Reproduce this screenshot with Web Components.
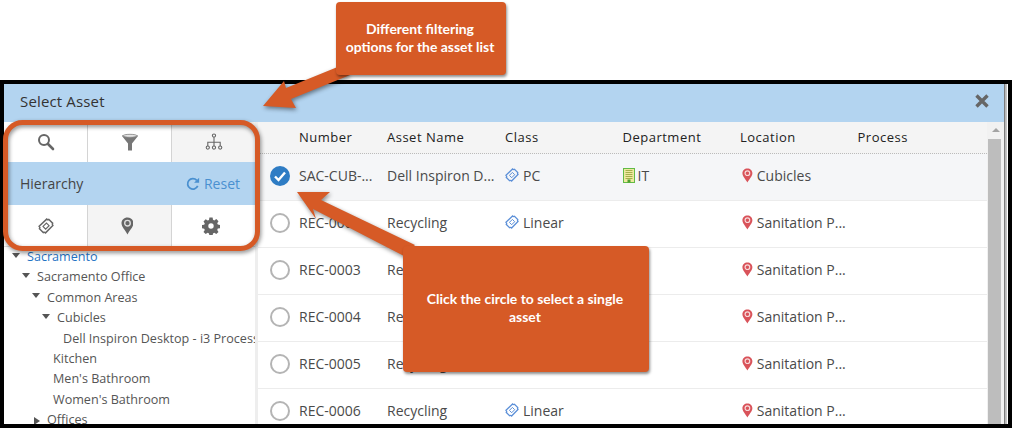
<!DOCTYPE html>
<html>
<head>
<meta charset="utf-8">
<style>
  html, body { margin: 0; padding: 0; background: #fff; }
  body { font-family: "Open Sans", "Liberation Sans", sans-serif; overflow: hidden; }
</style>
</head>
<body>
<screen-shot>
  <asset-dialog heading="Select Asset">
    <filter-panel slot="side"></filter-panel>
    <asset-tree slot="side"></asset-tree>
    <asset-table slot="main">
      <asset-row number="SAC-CUB-..." name="Dell Inspiron D..." cls="PC" dept="IT" loc="Cubicles" checked></asset-row>
      <asset-row number="REC-0002" name="Recycling" cls="Linear" loc="Sanitation P..."></asset-row>
      <asset-row number="REC-0003" name="Recycling" loc="Sanitation P..."></asset-row>
      <asset-row number="REC-0004" name="Recycling" loc="Sanitation P..."></asset-row>
      <asset-row number="REC-0005" name="Recycling" loc="Sanitation P..."></asset-row>
      <asset-row number="REC-0006" name="Recycling" cls="Linear" loc="Sanitation P..."></asset-row>
    </asset-table>
  </asset-dialog>
  <annotation-layer></annotation-layer>
  <call-out style="left:336px;top:2px;width:170px;height:73px">Different filtering<br>options for the asset list</call-out>
  <call-out style="left:403px;top:246px;width:246px;height:126px">Click the circle to select a single<br>asset</call-out>
</screen-shot>

<script>
const icons = {
  search: (c) => `<svg width="18" height="18" viewBox="0 0 18 18"><circle cx="7" cy="7" r="5" fill="none" stroke="${c}" stroke-width="2"/><path d="M11 11l5 5" stroke="${c}" stroke-width="2.6" stroke-linecap="round"/></svg>`,
  funnel: (c) => `<svg width="18" height="18" viewBox="0 0 18 18"><path d="M1 3C1 1 17 1 17 3L11 10.500V17.500H7V10.500Z" fill="${c}"/><ellipse cx="9" cy="2.800" rx="7" ry="1.500" fill="#e4e4e4" stroke="#8a8a8a" stroke-width=".8"/></svg>`,
  tree: (c) => `<svg width="18" height="18" viewBox="0 0 18 18" fill="none" stroke="${c}" stroke-width="1.100"><circle cx="9" cy="2.600" r="1.600"/><path d="M9 4.200V13M2.800 13V9.200H15.200V13"/><circle cx="2.800" cy="14.600" r="1.600"/><circle cx="9" cy="14.600" r="1.600"/><circle cx="15.200" cy="14.600" r="1.600"/></svg>`,
  ticket: (c, s = 14) => `<svg width="${s}" height="${s}" viewBox="0 0 14 14" fill="none"><path d="M1 7.200L7.600 1C8.200 1.600 8.900 1.700 9.500 1.300L12.800 4.500C12.400 5.200 12.500 5.900 13 6.500L6.600 13C6 12.400 5.200 12.300 4.600 12.700L1.300 9.400C1.800 8.800 1.600 7.800 1 7.200Z" stroke="${c}" stroke-width="1.300"/><path d="M4.400 7.400L7.400 4.400L9.700 6.700L6.700 9.700Z" stroke="${c}" stroke-width="1"/></svg>`,
  pin: (c, h = "#fff", s = 18) => `<svg width="${s * 0.72}" height="${s}" viewBox="0 0 13 18"><path d="M6.500 0.500C3 0.500 0.500 3 0.500 6.300C0.500 10 4.500 13.500 6.500 17.500C8.500 13.500 12.500 10 12.500 6.300C12.500 3 10 0.500 6.500 0.500Z" fill="${c}"/><circle cx="6.500" cy="6.200" r="2.800" fill="none" stroke="${h}" stroke-width="1.400"/></svg>`,
  gear: (c) => `<svg width="18" height="18" viewBox="0 0 18 18"><path fill="${c}" fill-rule="evenodd" d="M7.400 0.500h3.200l.4 2.300 1.300.6 2-1.300 2.200 2.200-1.300 2 .6 1.300 2.300.4v3.200l-2.300.4-.6 1.300 1.300 2-2.200 2.200-2-1.300-1.300.6-.4 2.300H7.400l-.4-2.300-1.300-.6-2 1.300L1.500 15l1.300-2-.6-1.300-2.300-.4V8.100l2.300-.4.6-1.300-1.300-2 2.200-2.200 2 1.300 1.300-.6zM9 6.300a2.700 2.700 0 1 0 0 5.400 2.700 2.700 0 0 0 0-5.400z"/></svg>`,
  building: () => `<svg width="12" height="15" viewBox="0 0 12 15"><rect x=".5" y=".5" width="11" height="14" fill="#eee9a0" stroke="#62bb46"/><path d="M2.500 2.500h7M2.500 4.500h7M2.500 6.500h7M2.500 8.500h7M2.500 10.500h7" stroke="#a5b04a"/><rect x="4.500" y="11.500" width="3" height="3" fill="#4f9e2f"/></svg>`,
  reset: (c) => `<svg width="14" height="14" viewBox="0 0 16 16" fill="none"><path d="M13.400 10.200A6 6 0 1 1 12.300 3.800" stroke="${c}" stroke-width="2"/><path d="M15 .8V6.600H9.200Z" fill="${c}"/></svg>`,
};

function shadow(el, html) {
  el.attachShadow({ mode: "open" });
  el.shadowRoot.innerHTML = html;
}

class ScreenShot extends HTMLElement {
  constructor() {
    super();
    shadow(this, `
      <style>
        :host { display: block; position: relative; width: 1012px; height: 428px; box-sizing: border-box; padding-top: 80px; overflow: hidden; }
        .frame { display: flex; height: 348px; box-sizing: border-box; border: 4px solid #000; }
        .edge { width: 4px; background: linear-gradient(90deg, #7c7c7c 0, #7c7c7c 25%, #b5b5b5 30%, #c9c9c9 70%, #fff 75%); }
      </style>
      <div class="frame"><slot></slot><div class="edge"></div></div>
      <slot name="over"></slot>
    `);
  }
  connectedCallback() {
    this.querySelectorAll("annotation-layer, call-out").forEach((n) => n.setAttribute("slot", "over"));
  }
}

class AssetDialog extends HTMLElement {
  constructor() {
    super();
    shadow(this, `
      <style>
        :host { display: flex; flex-direction: column; flex: 1; min-width: 0; background: #fff; color: #4a4a4a; }
        header { display: flex; align-items: center; justify-content: space-between; height: 38px; box-sizing: border-box; flex: none; padding: 0 14px 5px 16px; background: #b3d4f0; font-size: 15px; color: #333; letter-spacing: .15px; }
        .x { display: block; }
        .body { display: flex; flex: 1; min-height: 0; }
        .side { width: 254px; flex: none; display: flex; flex-direction: column; box-sizing: border-box; border-right: 3px solid #eee; overflow: hidden; }
        .main { flex: 1; min-width: 0; display: flex; }
      </style>
      <header><span>${this.getAttribute("heading")}</span>
        <svg class="x" width="16" height="16" viewBox="0 0 16 16"><path d="M2.500 2.500L13.500 13.500M13.500 2.500L2.500 13.500" stroke="#666" stroke-width="3.400"/></svg>
      </header>
      <div class="body">
        <div class="side"><slot name="side"></slot></div>
        <div class="main"><slot name="main"></slot></div>
      </div>
    `);
  }
}

class FilterPanel extends HTMLElement {
  constructor() {
    super();
    const cell = (svg, cls = "") => `<div class="cell ${cls}">${svg}</div>`;
    shadow(this, `
      <style>
        :host { display: block; flex: none; }
        .tabs { display: grid; grid-template-columns: 84px 84px 1fr; }
        .top { height: 40px; }
        .bottom { height: 41px; border-bottom: 1px solid #ddd; }
        .cell { display: flex; align-items: center; justify-content: center; background: #fff; border-right: 1px solid #d4d4d4; }
        .cell:last-child { border-right: 0; }
        .on { background: #f4f4f4; }
        .nudge svg { margin-right: 5px; }
        .band { display: flex; align-items: center; justify-content: space-between; height: 43px; box-sizing: border-box; padding: 0 15px 0 16px; background: #b3d4f0; font-size: 14px; color: #444; }
        .reset { display: flex; align-items: center; gap: 4px; color: #4a90d0; }
      </style>
      <div class="tabs top">${cell(icons.search("#666"))}${cell(icons.funnel("#777"))}${cell(icons.tree("#666"), "on")}</div>
      <div class="band"><span>Hierarchy</span><span class="reset">${icons.reset("#4a90d0")}Reset</span></div>
      <div class="tabs bottom">${cell(icons.ticket("#666", 16))}${cell(icons.pin("#666", "#ddd", 18), "on nudge")}${cell(icons.gear("#666"), "nudge")}</div>
    `);
  }
}

class AssetTree extends HTMLElement {
  constructor() {
    super();
    const nodes = [
      [23, "Sacramento", "down", "link"],
      [33, "Sacramento Office", "down"],
      [43, "Common Areas", "down"],
      [53, "Cubicles", "down"],
      [59, "Dell Inspiron Desktop - i3 Processor"],
      [49, "Kitchen"],
      [49, "Men's Bathroom"],
      [49, "Women's Bathroom"],
      [43, "Offices", "right"],
    ];
    shadow(this, `
      <style>
        :host { display: block; flex: 1; min-height: 0; overflow: hidden; font-size: 12.600px; color: #555; }
        .row { height: 20.400px; line-height: 20.400px; white-space: nowrap; }
        .link { color: #1f73c4; }
        i { display: inline-block; width: 0; height: 0; vertical-align: middle; }
        .down { margin-left: -15px; margin-right: 7px; border: 4px solid transparent; border-top: 5px solid #555; border-bottom: 0; margin-top: -5px; }
        .right { margin-left: -13px; margin-right: 7px; border: 4px solid transparent; border-left: 6px solid #555; border-right: 0; }
      </style>
      ${nodes.map(([x, t, arrow, cls]) => `<div class="row ${cls || ""}" style="padding-left:${x}px">${arrow ? `<i class="${arrow}"></i>` : ""}${t}</div>`).join("")}
    `);
  }
}

class AssetTable extends HTMLElement {
  constructor() {
    super();
    shadow(this, `
      <style>
        :host { display: flex; flex: 1; min-width: 0; font-size: 13px; }
        .list { flex: 1; min-width: 0; overflow: hidden; }
        .head { display: grid; grid-template-columns: 41px 88px 118px 117.500px 117.500px 117.500px 1fr; align-items: center; height: 32px; box-sizing: border-box; padding-bottom: 1px; background: #f4f4f4; border-bottom: 1px dotted #bbb; color: #222; letter-spacing: .5px; font-weight: 500; }
        .bar { width: 17px; flex: none; display: flex; flex-direction: column; align-items: center; background: #f1f1f1; }
        .up { width: 0; height: 0; margin: 6px 0 5px; border: 4px solid transparent; border-top: 0; border-bottom: 4px solid #a3a3a3; }
        .thumb { flex: 1; width: 13px; margin-left: -2px; margin-top: 2px; background: #bdbdbd; }
      </style>
      <div class="list">
        <div class="head"><span></span><span>Number</span><span>Asset Name</span><span>Class</span><span>Department</span><span>Location</span><span>Process</span></div>
        <slot></slot>
      </div>
      <div class="bar"><div class="up"></div><div class="thumb"></div></div>
    `);
  }
}

class AssetRow extends HTMLElement {
  constructor() {
    super();
    const a = (n) => this.getAttribute(n);
    const checked = this.hasAttribute("checked");
    const radio = checked
      ? `<svg width="20" height="20" viewBox="0 0 20 20"><circle cx="10" cy="10" r="10" fill="#2e7cc4"/><path d="M5 10.500L8.500 14L15 6.500" fill="none" stroke="#fff" stroke-width="2.400"/></svg>`
      : `<svg width="20" height="20" viewBox="0 0 20 20"><circle cx="10" cy="10" r="9" fill="#fff" stroke="#b4b4b4" stroke-width="2"/></svg>`;
    shadow(this, `
      <style>
        :host { display: block; font-size: 14px; color: #4a4a4a; }
        .row { display: grid; grid-template-columns: 41px 88px 118px 117.500px 117.500px 117.500px 1fr; align-items: center; height: 47px; box-sizing: border-box; padding-bottom: 2px; border-bottom: 1px solid #ececec; background: ${checked ? "#f5f6f8" : "#fff"}; white-space: nowrap; }
        .row > span:not(.radio) { padding-bottom: 2px; }
        .radio { display: flex; padding-left: 12px; }
        .ic { display: flex; align-items: center; gap: 4px; }
        .ic svg { flex: none; }
        .dept { gap: 3px; }
        .loc { padding-left: 2px; }
      </style>
      <div class="row">
        <span class="radio">${radio}</span>
        <span>${a("number")}</span>
        <span>${a("name")}</span>
        <span class="ic">${a("cls") ? icons.ticket("#5b8fd8") + a("cls") : ""}</span>
        <span class="ic dept">${a("dept") ? icons.building() + a("dept") : ""}</span>
        <span class="ic loc">${icons.pin("#d9535a", "#f7dada", 15)}${a("loc")}</span>
        <span></span>
      </div>
    `);
  }
}

class AnnotationLayer extends HTMLElement {
  constructor() {
    super();
    shadow(this, `
      <style>
        :host { display: block; position: absolute; left: 0; top: 0; width: 1012px; height: 428px; pointer-events: none; }
        svg { display: block; }
        .s { filter: drop-shadow(1px 2px 2px rgba(0,0,0,.45)); }
      </style>
      <svg width="1012" height="428" viewBox="0 0 1012 428">
        <rect class="s" x="5.500" y="122.500" width="252" height="126" rx="17" fill="none" stroke="#d65a26" stroke-width="5"/>
        <path class="s" fill="#d65a26" d="M263 106L284 81L286 88L340 66L350 75L291 99L296 108Z"/>
        <path class="s" fill="#d65a26" d="M297 192L330 192L321 200L415 245L404 256L313 209L316 219Z"/>
      </svg>
    `);
  }
}

class CallOut extends HTMLElement {
  constructor() {
    super();
    shadow(this, `
      <style>
        :host { display: flex; position: absolute; box-sizing: border-box; align-items: center; justify-content: center; padding: 0 2px 2px 0; text-align: center; background: #d65a26; border-radius: 4px; box-shadow: 1px 2px 3px rgba(0,0,0,.45); color: #fff; font: bold 13.950px/18px Lato, "Open Sans", sans-serif; }
      </style>
      <span><slot></slot></span>
    `);
  }
}

customElements.define("screen-shot", ScreenShot);
customElements.define("asset-dialog", AssetDialog);
customElements.define("filter-panel", FilterPanel);
customElements.define("asset-tree", AssetTree);
customElements.define("asset-table", AssetTable);
customElements.define("asset-row", AssetRow);
customElements.define("annotation-layer", AnnotationLayer);
customElements.define("call-out", CallOut);
</script>
</body>
</html>
